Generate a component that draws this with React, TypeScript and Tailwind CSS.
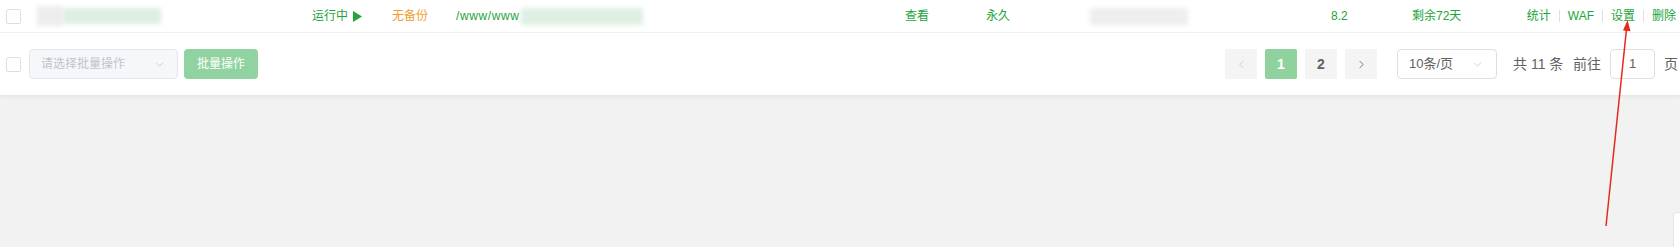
import React from 'react';
import { ChevronDown, ChevronLeft, ChevronRight } from 'lucide-react';

const font = { fontFamily: '"Liberation Sans", "Noto Sans CJK SC", sans-serif' };

const Checkbox = () => (
  <span className="block w-[15px] h-[15px] border border-[#dcdfe6] rounded-[2px] bg-white" />
);

const Sep = () => <span className="inline-block w-px h-[12px] bg-[#dcdfe6] mx-[8px]" />;

const SiteRow = () => (
  <div className="grid grid-cols-[37px_275px_80px_64px_449px_81px_104px_241px_81px_113px_1fr] items-center h-[33px] border-b border-[#ebeef5] text-[12px]">
    <div className="pl-[6px]">
      <Checkbox />
    </div>
    <div className="flex items-center h-[22px]">
      <span className="w-[26px] h-[20px] bg-[#ededed] blur-[2px]" />
      <span className="w-[98px] h-[16px] bg-[#deefe1] blur-[2px]" />
    </div>
    <div className="flex items-center gap-[5px] text-[#20a53a]">
      <span>运行中</span>
      <svg width="9" height="11" viewBox="0 0 9 11">
        <polygon points="0,0 9,5.5 0,11" fill="#20a53a" />
      </svg>
    </div>
    <div className="text-[#f0a030]">无备份</div>
    <div className="flex items-center">
      <span className="text-[#20a53a] tracking-[0.6px]">/www/www</span>
      <span className="ml-[2px] w-[122px] h-[17px] bg-[#dff0e3] blur-[2px]" />
    </div>
    <div className="text-[#20a53a]">查看</div>
    <div className="text-[#20a53a]">永久</div>
    <div className="flex items-center">
      <span className="w-[98px] h-[17px] bg-[#eeeeee] blur-[2px]" />
    </div>
    <div className="text-[#20a53a]">8.2</div>
    <div className="text-[#20a53a]">剩余72天</div>
    <div className="flex items-center justify-end pr-[4px] text-[#20a53a]">
      <span>统计</span>
      <Sep />
      <span>WAF</span>
      <Sep />
      <span>设置</span>
      <Sep />
      <span>删除</span>
    </div>
  </div>
);

const Footer = () => (
  <div className="flex items-center justify-between h-[62px] pr-[2px]">
    <div className="flex items-center pl-[6px]">
      <Checkbox />
      <div className="ml-[8px] flex items-center justify-between w-[149px] h-[30px] px-[11px] border border-[#e4e7ed] rounded-[4px] bg-[#f5f7fa] text-[12px] text-[#c0c4cc]">
        <span>请选择批量操作</span>
        <ChevronDown size={13} strokeWidth={1.5} />
      </div>
      <button className="ml-[6px] w-[74px] h-[30px] rounded-[4px] bg-[#90d3a0] text-white text-[12px]">
        批量操作
      </button>
    </div>
    <div className="flex items-center text-[14px] text-[#606266]">
      <div className="flex items-center gap-[8px]">
        <span className="flex items-center justify-center w-[32px] h-[30px] rounded-[2px] bg-[#f4f4f5] text-[#c0c4cc]">
          <ChevronLeft size={13} strokeWidth={1.5} />
        </span>
        <span className="flex items-center justify-center w-[32px] h-[30px] rounded-[2px] bg-[#90d29e] text-white font-bold">1</span>
        <span className="flex items-center justify-center w-[32px] h-[30px] rounded-[2px] bg-[#f4f4f5] font-bold">2</span>
        <span className="flex items-center justify-center w-[32px] h-[30px] rounded-[2px] bg-[#f4f4f5] text-[#606266]">
          <ChevronRight size={13} strokeWidth={1.5} />
        </span>
      </div>
      <div className="ml-[20px] flex items-center justify-between w-[100px] h-[30px] pl-[11px] pr-[12px] border border-[#dcdfe6] rounded-[4px] bg-white text-[13px]">
        <span>10条/页</span>
        <ChevronDown size={13} strokeWidth={1.5} className="text-[#c0c4cc]" />
      </div>
      <span className="ml-[16px] w-[60px] whitespace-pre">共 11 条</span>
      <span className="w-[37px]">前往</span>
      <span className="flex items-center justify-center w-[45px] h-[30px] border border-[#dcdfe6] rounded-[4px] bg-white text-[13px]">1</span>
      <span className="ml-[9px]">页</span>
    </div>
  </div>
);

export default function App() {
  return (
    <div className="relative h-[247px] overflow-hidden bg-[#f2f2f2]" style={font}>
      <div className="bg-white shadow-[0_2px_4px_rgba(0,0,0,0.06)]">
        <SiteRow />
        <Footer />
      </div>

      <div className="absolute left-[1673px] top-[212px] w-[40px] h-[60px] bg-white border border-[#e4e4e4] rounded-tl-[4px]" />

      <svg className="absolute inset-0 pointer-events-none" width="1680" height="247">
        <line x1="1606" y1="226" x2="1626.6" y2="28" stroke="#e52a1c" strokeWidth="1.5" />
        <polygon points="1627.6,20 1630.5,31.3 1623,30.6" fill="#e52a1c" />
      </svg>
    </div>
  );
}
